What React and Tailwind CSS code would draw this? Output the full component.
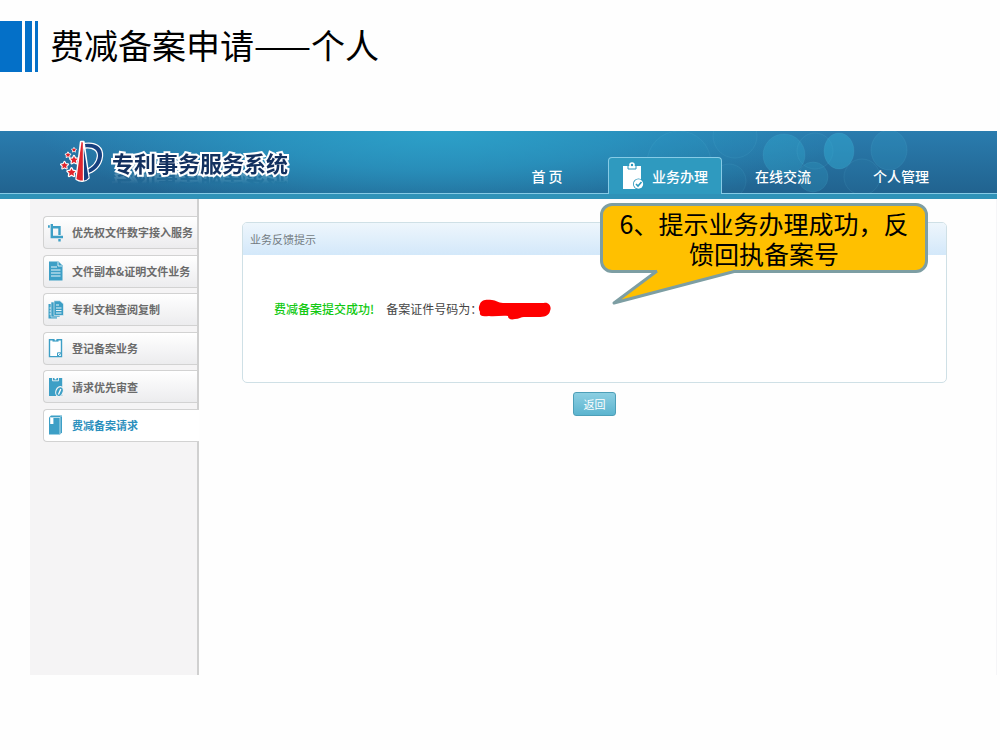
import React from 'react';
import clsx from 'clsx';

const CropIcon = () => (
  <svg viewBox="0 0 16 20" className="w-4 h-5 shrink-0" fill="none" stroke="#3d9fc6" strokeWidth="2.4">
    <path d="M0 3.5H1.8M3.8 1V14H15M3.8 4.2H11.5V12M11.5 16V18.5" />
  </svg>
);

const FileTextIcon = () => (
  <svg viewBox="0 0 16 20" className="w-4 h-5 shrink-0">
    <path d="M1 0.5H10.5L14.5 4.5V19.5H1Z" fill="#3d9fc6" />
    <path d="M10 1V5H14" fill="none" stroke="#fff" strokeWidth="0.8" />
    <path d="M3 6H9M3 9H12.5M3 12H12.5M3 15H12.5" stroke="#e8f5fa" strokeWidth="1" />
  </svg>
);

const FilesIcon = () => (
  <svg viewBox="0 0 16 20" className="w-4 h-5 shrink-0">
    <path d="M0.5 4H4V17H9V18.5H0.5Z" fill="#3d9fc6" />
    <path d="M3 2H8V15H12V17H3Z" fill="#3d9fc6" stroke="#f5f5f5" strokeWidth="0.6" />
    <path d="M6 0.8H12L15.5 4V15.5H6Z" fill="#3d9fc6" stroke="#f5f5f5" strokeWidth="0.6" />
    <path d="M8 5H11M8 8H13.5M8 10.5H13.5M8 13H13.5M1.5 8H3M1.5 11H3M1.5 14H3" stroke="#e8f5fa" strokeWidth="1" />
  </svg>
);

const ClipboardIcon = () => (
  <svg viewBox="0 0 16 20" className="w-4 h-5 shrink-0">
    <path d="M1.5 1.8H13.5V18.6H1.5Z" fill="#fff" stroke="#3d9fc6" strokeWidth="1.4" />
    <path d="M4.5 1H10.5V3.6H4.5Z" fill="#3d9fc6" />
    <circle cx="7.5" cy="1.6" r="1" fill="#fff" />
    <path d="M9.5 18.5V14.8H13.5L9.5 18.5Z" fill="#fff" stroke="#3d9fc6" strokeWidth="1" />
  </svg>
);

const ClipboardLinkIcon = () => (
  <svg viewBox="0 0 16 20" className="w-4 h-5 shrink-0">
    <path d="M1 1H14.2V19H1Z" fill="#3d9fc6" />
    <path d="M4.5 0.5V3.8H10.5V0.5" fill="none" stroke="#f5f5f5" strokeWidth="0.9" />
    <circle cx="7.5" cy="1.5" r="1.1" fill="#fff" />
    <ellipse cx="11.5" cy="14.5" rx="3.6" ry="5" transform="rotate(20 11.5 14.5)" fill="#3d9fc6" stroke="#f5f5f5" strokeWidth="1.1" />
    <path d="M10.5 17.5L12.8 12" stroke="#fff" strokeWidth="1.3" />
  </svg>
);

const BookIcon = () => (
  <svg viewBox="0 0 16 20" className="w-4 h-5 shrink-0">
    <path d="M1 2.5L3 0.5H14V17.5L12 19.5H1Z" fill="#3d9fc6" />
    <path d="M12 2.5V19M2 2.5H12L13.5 1" fill="none" stroke="#d4ecf5" strokeWidth="0.8" />
    <path d="M2.2 3H5.4V9H2.2Z" fill="#fff" />
  </svg>
);

const menuItems = [
  { label: '优先权文件数字接入服务', icon: CropIcon },
  { label: '文件副本&证明文件业务', icon: FileTextIcon },
  { label: '专利文档查阅复制', icon: FilesIcon },
  { label: '登记备案业务', icon: ClipboardIcon },
  { label: '请求优先审查', icon: ClipboardLinkIcon },
  { label: '费减备案请求', icon: BookIcon, active: true },
];

const tabs = [
  { label: '首 页' },
  { label: '业务办理', active: true },
  { label: '在线交流' },
  { label: '个人管理' },
];

const Star = ({ x, y, r }) => (
  <path
    transform={`translate(${x} ${y}) scale(${r})`}
    d="M0 -1L0.29 -0.4L0.95 -0.31L0.48 0.15L0.59 0.81L0 0.5L-0.59 0.81L-0.48 0.15L-0.95 -0.31L-0.29 -0.4Z"
    fill="#e0242c"
    stroke="#fff"
    strokeWidth="0.6"
    strokeLinejoin="round"
    paintOrder="stroke"
  />
);

const Logo = () => (
  <svg viewBox="0 0 44 44" className="w-11 h-11 shrink-0">
    <path
      d="M25 4C37 2.500 42.500 8 42 16C41 26 34 32 25.500 34V30.500C32 28 37.500 23 38 16C38.300 10 33 6.500 25 7.500Z"
      fill="#17407f"
      stroke="#fff"
      strokeWidth="2.4"
      paintOrder="stroke"
    />
    <path d="M21 2H23.500L28.500 38C25 41.500 20 41.500 16.500 39Z" fill="#fff" stroke="#fff" strokeWidth="2.400" strokeLinejoin="round" />
    <path d="M21.500 2L22.800 2.500V40.500C20.500 40.800 18 40 16.500 39Z" fill="#e0242c" />
    <path d="M23.800 8L28.500 37.500C27.500 39.500 25.800 40.200 24 40.500Z" fill="#17407f" />
    <Star x={14} y={10} r={2.2} />
    <Star x={8} y={15} r={2.6} />
    <Star x={14} y={20} r={4} />
    <Star x={4.5} y={25.5} r={3.6} />
    <Star x={11.5} y={32.5} r={4.2} />
  </svg>
);

const TabIcon = () => (
  <svg viewBox="0 0 22 28" className="w-[22px] h-7 shrink-0">
    <path d="M1 4H19V17L14 27H1Z" fill="#fff" />
    <path d="M6 3.500H14V7H6Z" fill="#fff" stroke="#2b98bd" strokeWidth="1" />
    <circle cx="10" cy="3" r="2" fill="#2b98bd" stroke="#fff" strokeWidth="1.600" />
    <circle cx="16.500" cy="22" r="5.500" fill="#2b98bd" />
    <circle cx="16.500" cy="22" r="4.700" fill="#fff" />
    <path d="M14 22L16 24L19.500 20" fill="none" stroke="#2b98bd" strokeWidth="1.600" />
  </svg>
);

const Bubbles = () => (
  <svg viewBox="0 0 360 62" className="absolute right-0 top-0 w-[360px] h-[62px]" aria-hidden="true">
    <g fill="#35b3d8" stroke="#6ccbe6" strokeWidth="0.8" strokeOpacity="0.14">
      <circle cx="42" cy="32" r="32" fillOpacity="0.06" />
      <circle cx="98" cy="5" r="22" fillOpacity="0.05" />
      <circle cx="92" cy="50" r="17" fillOpacity="0.06" />
      <circle cx="147" cy="24" r="21" fillOpacity="0.3" />
      <circle cx="178" cy="20" r="18" fillOpacity="0.06" />
      <circle cx="176" cy="46" r="15" fillOpacity="0.2" />
      <ellipse cx="202" cy="20" rx="15" ry="18" fillOpacity="0.42" />
      <circle cx="225" cy="46" r="18" fillOpacity="0.05" />
      <ellipse cx="252" cy="19" rx="18" ry="20" fillOpacity="0.16" />
    </g>
  </svg>
);

const SiteHeader = () => (
  <header className="bg-[#2f92b8]">
    <div className="relative flex h-[63px] items-end border-b border-[#86cbe6] bg-[radial-gradient(ellipse_40%_140%_at_44%_0%,#2ca0c8_0%,#2a9cc6b0_45%,transparent_100%),linear-gradient(to_bottom,#2a7cae,#21638f)]">
      <Bubbles />
      <div className="flex items-center self-center pl-[60px]">
        <Logo />
        <span className="ml-2 text-[22px] leading-8 font-bold text-[#12305f] [-webkit-text-stroke:4px_white] [paint-order:stroke_fill] [-webkit-box-reflect:below_-10px_linear-gradient(transparent_50%,rgba(255,255,255,0.35))]">
          专利事务服务系统
        </span>
      </div>
      <nav className="relative mr-[37px] -mb-px ml-auto flex">
        {tabs.map((tab) => (
          <a
            key={tab.label}
            href="#"
            className={clsx(
              'mx-0.5 flex h-[37px] w-[114px] items-center justify-center gap-2 text-sm font-medium text-white',
              tab.active && 'rounded-t-[4px] border border-b-0 border-[#86cbe6] bg-[#2f9abf]'
            )}
          >
            {tab.active && <TabIcon />}
            {tab.label}
          </a>
        ))}
      </nav>
    </div>
    <div className="h-[5px]" />
  </header>
);

const Sidebar = () => (
  <aside className="w-[169px] shrink-0 border-r-2 border-[#d0d0d0] bg-[#f5f4f5] pt-[17px] pl-[13px]">
    <nav className="flex h-[226px] flex-col justify-between">
      {menuItems.map(({ label, icon: Icon, active }) => (
        <a
          key={label}
          href="#"
          className={clsx(
            'flex h-[33px] items-center gap-2 rounded-l-[4px] border border-r-0 border-[#d2d2d2] pl-1 text-[11px] font-bold whitespace-nowrap',
            active ? '-mr-0.5 bg-white text-[#2b8fbd]' : 'bg-linear-to-b from-white to-[#ececee] text-[#6b6b6b]'
          )}
        >
          <Icon />
          {label}
        </a>
      ))}
    </nav>
  </aside>
);

const Callout = () => (
  <div className="absolute top-[-20px] right-[18px] w-[328px] rounded-xl border-3 border-[#7d9ea3] bg-[#ffc000] px-2 py-0.5 text-center text-[25px] leading-[30px] text-black">
    6、提示业务办理成功，反馈回执备案号
    <svg viewBox="0 0 130 38" className="absolute top-full left-[8px] -mt-px h-[38px] w-[130px]" aria-hidden="true">
      <path d="M46 0H125V1L3 34L46 3Z" fill="#ffc000" />
      <path d="M46 2L3 34L125 2" fill="none" stroke="#7d9ea3" strokeWidth="3" strokeLinejoin="round" />
    </svg>
  </div>
);

const FeedbackPanel = () => (
  <section className="relative rounded-[5px] border border-[#cfe0e6] bg-white">
    <h2 className="flex h-8 items-center rounded-t-[4px] bg-linear-to-b from-[#eef6fc] to-[#d3e8fa] pl-[7px] text-[11px] text-[#737b82]">
      业务反馈提示
    </h2>
    <div className="flex h-[127px] items-start pt-11 pl-[31px] text-xs leading-5">
      <p className="font-medium text-[#12c912]">费减备案提交成功!</p>
      <p className="ml-3 text-[#444]">备案证件号码为：</p>
      <svg viewBox="0 0 73 22" className="-ml-1 h-[22px] w-[73px]" aria-hidden="true">
        <path
          d="M2 5C3 1 8 0 14 1C18 1 20 4 25 4H66C71 3 74 8 72 12C71 17 66 18 60 18H46C43 18 41 20 37 20C33 21 30 20 30 17C24 16 17 18 11 17C4 18 1 17 2 13C0 10 1 7 2 5Z"
          fill="#fe0000"
        />
      </svg>
    </div>
    <Callout />
  </section>
);

const App = () => (
  <div className="min-h-screen bg-[#fefefe] font-['Noto_Sans_CJK_SC',sans-serif]">
    <div className="flex h-[131px] items-start pt-[21px]">
      <div className="flex h-[51px] gap-[3px]">
        <span className="w-[22px] bg-[#0470c8]" />
        <span className="w-[7px] bg-[#0470c8]" />
        <span className="w-[3px] bg-[#0470c8]" />
      </div>
      <h1 className="ml-3 text-[34px] leading-12 text-black">费减备案申请——个人</h1>
    </div>

    <div className="mr-[3px]">
      <SiteHeader />
      <div className="flex min-h-[476px] border-r border-[#f5f5f7] pl-[30px]">
        <Sidebar />
        <main className="flex-1 pt-[23px] pr-[49px] pl-[43px]">
          <FeedbackPanel />
          <div className="mt-[9px] flex justify-center">
            <button
              type="button"
              className="h-6 w-[43px] rounded-[3px] border border-[#4d9fb8] bg-linear-to-b from-[#8ccfe2] to-[#5bb4cf] text-[11px] text-white"
            >
              返回
            </button>
          </div>
        </main>
      </div>
    </div>
  </div>
);

export default App;
